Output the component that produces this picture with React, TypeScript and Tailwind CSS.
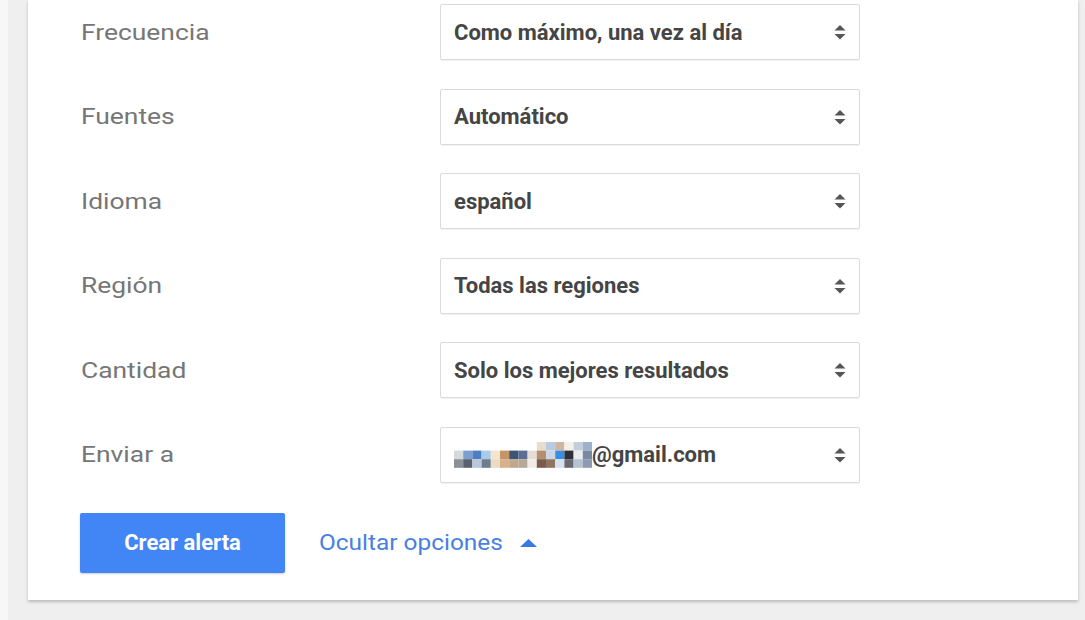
import React from 'react';

type Row = { label: string; value: React.ReactNode };

const SortArrows = () => (
  <svg width="12" height="18" viewBox="0 0 12 18" className="shrink-0">
    <path d="M6 2 L11.5 7.5 H0.5 Z" fill="#555" />
    <path d="M6 16.5 L11.5 11 H0.5 Z" fill="#555" />
  </svg>
);

// pixelated part of the address (blurred out in the screenshot)
const mosaicCols: (string | null)[][] = [
  [null, '#d5d8dc', '#8b8f96'],
  [null, '#7aa0d0', '#5a6070'],
  [null, '#4f7ec0', '#b8c8dc'],
  [null, '#a8cbe8', '#6e7c8c'],
  [null, '#f3e6cc', '#eadbc4'],
  [null, '#c69466', '#d8b08a'],
  [null, '#3f5473', '#c0a890'],
  [null, '#5b6f94', '#b7a898'],
  [null, '#e5ddd2', '#f0ebe4'],
  ['#e8dccd', '#b58e70', '#7a5a48'],
  ['#b9cbe0', '#cdd7e4', '#8f7463'],
  ['#cfb6a0', '#3a8ee0', '#d6e2ee'],
  ['#f4f0ea', '#2f2f38', '#686870'],
  ['#c4cedb', '#e9ecf0', '#b6c2d2'],
  ['#9db0cc', '#7889a2', '#8d9ab0'],
];

const Mosaic = () => (
  <svg width="138" height="26" viewBox="0 0 138 26" className="shrink-0">
    {mosaicCols.map((col, x) =>
      col.map((c, y) =>
        c ? <rect key={`${x}-${y}`} x={x * 9.2} y={y * 8.6} width="9.2" height="8.6" fill={c} /> : null
      )
    )}
  </svg>
);

const rows: Row[] = [
  { label: 'Frecuencia', value: 'Como máximo, una vez al día' },
  { label: 'Fuentes', value: 'Automático' },
  { label: 'Idioma', value: 'español' },
  { label: 'Región', value: 'Todas las regiones' },
  { label: 'Cantidad', value: 'Solo los mejores resultados' },
  {
    label: 'Enviar a',
    value: (
      <span className="flex items-center">
        <Mosaic />
        <span>@gmail.com</span>
      </span>
    ),
  },
];

const App = () => {
  return (
    <div className="h-[620px] w-[1085px] overflow-hidden bg-[#f7f7f7] font-['Roboto',sans-serif]">
      <div className="ml-[8px] h-full bg-[#efefef] pl-[20px] pr-[7px]">
        <div className="bg-white pt-[4px] pb-[27px] pl-[52px] shadow-[0_2px_3px_rgba(0,0,0,0.22)]">
          <div className="flex flex-col gap-[28.5px]">
            {rows.map((r) => (
              <div key={r.label} className="flex h-[56px] items-center">
                <div className="w-[360px] pl-[1px] text-[22px] text-[#767676]">
                  <span className="inline-block origin-left scale-x-[1.2]">{r.label}</span>
                </div>
                <div className="flex h-[56px] w-[420px] items-center justify-between rounded-[2px] border border-[#dadada] pl-[13px] pr-[13px] shadow-[0_1px_1px_rgba(0,0,0,0.06)]">
                  <span className="text-[22px] font-bold text-[#454545]">{r.value}</span>
                  <SortArrows />
                </div>
              </div>
            ))}
          </div>
          <div className="mt-[30px] flex items-center">
            <button className="h-[60px] w-[205px] rounded-[2px] bg-[#4285f4] text-[22px] font-bold text-white shadow-[0_1px_2px_rgba(0,0,0,0.2)]">
              Crear alerta
            </button>
            <button className="ml-[34px] flex items-center gap-[35px] text-[22px] text-[#4a7fe0]">
              <span className="inline-block origin-left scale-x-[1.11]">Ocultar opciones</span>
              <svg width="17" height="8" viewBox="0 0 17 8">
                <path d="M8.5 0 L17 8 H0 Z" fill="#3b78e7" />
              </svg>
            </button>
          </div>
        </div>
      </div>
    </div>
  );
};

export default App;
